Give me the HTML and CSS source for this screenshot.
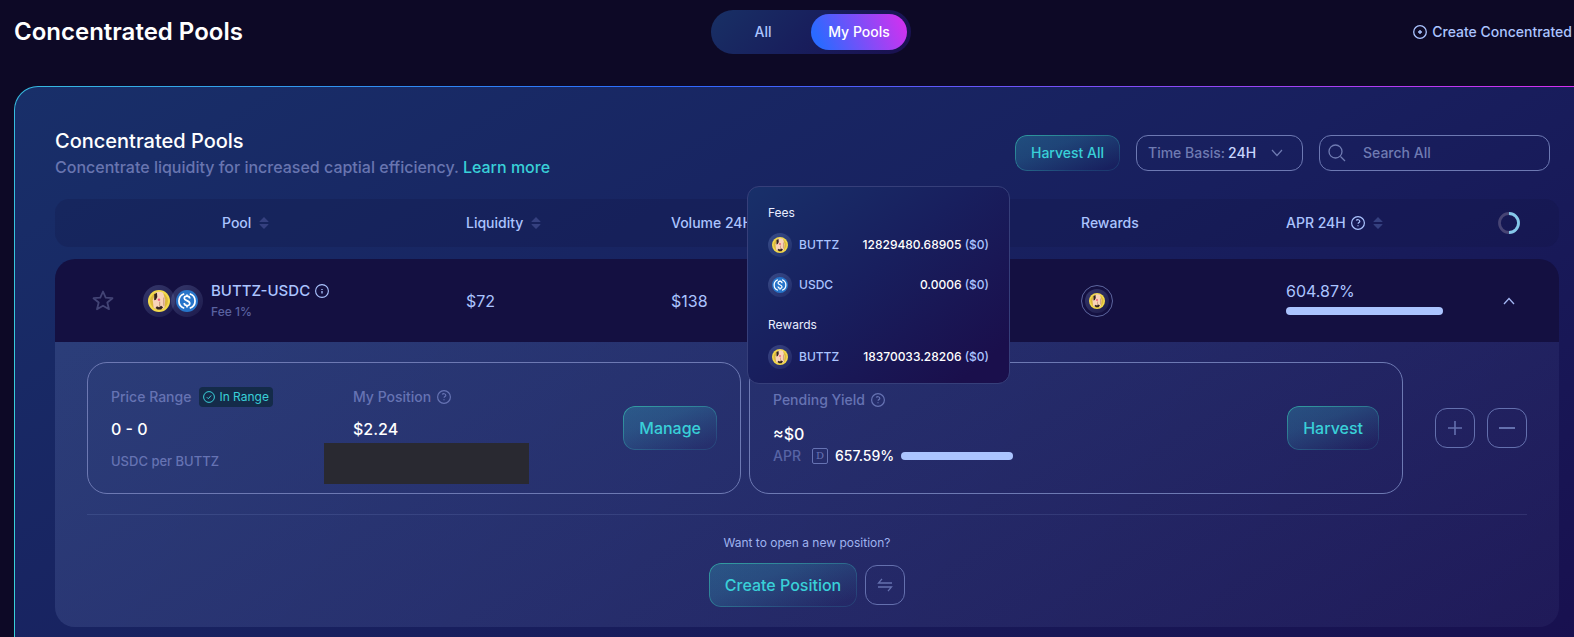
FILE: index.html
```html
<!DOCTYPE html>
<html lang="en">
<head>
<meta charset="utf-8">
<title>Concentrated Pools</title>
<link rel="stylesheet" href="styles.css">
</head>
<body>
<svg class="defs" aria-hidden="true">
  <symbol id="buttz" viewBox="0 0 32 32">
    <circle cx="16" cy="16" r="16" fill="#f3da4c"/>
    <circle cx="16" cy="16" r="13" fill="#dcb93c"/>
    <path d="M11 4c3-2 8-2 11 0l3 10-1 11c-2 4-13 4-16 0l-1-10z" fill="#f8d3b8"/>
    <path d="M9 6l4-2 .5 6-2 4-2.500 1zM11 26l2-2.500 3 1.500 3-2 3 2-3 3.500h-5z" fill="#33241f"/>
    <path d="M17 17v7M23 11v12" stroke="#b98468" stroke-width="1.200"/>
    <circle cx="16" cy="14" r="1.800" fill="#f0567a"/>
  </symbol>
  <symbol id="usdc" viewBox="0 0 32 32">
    <circle cx="16" cy="16" r="16" fill="#2775ca"/>
    <path d="M12 5.500a11 11 0 0 0 0 21M20 5.500a11 11 0 0 1 0 21" fill="none" stroke="#fff" stroke-width="2.500"/>
    <path d="M20 12.500c0-5-8-4.500-8-.5s8 3 8 7.500-8 4-8-.5M16 6.500v3M16 22.500v3" fill="none" stroke="#fff" stroke-width="2.500"/>
  </symbol>
  <symbol id="help" viewBox="0 0 14 14">
    <circle cx="7" cy="7" r="6.400" fill="none" stroke="currentColor" stroke-width="1.200"/>
    <path d="M5.300 4.600c.6-1.300 3.500-1.200 3.500.6 0 1.300-1.600 1.300-1.700 2.600M7 9.200v1" fill="none" stroke="currentColor" stroke-width="1.200"/>
  </symbol>
  <symbol id="sort" viewBox="0 0 10 12">
    <path d="M5 0l4.500 4.500q.3.500-.4.500H.9q-.7 0-.4-.5zM5 12L.5 7.500Q.2 7 .9 7h8.200q.7 0 .4.500z" fill="currentColor"/>
  </symbol>
</svg>

<header class="topbar">
  <h1 class="title">Concentrated Pools</h1>
  <nav class="tabs">
    <button class="tab">All</button>
    <button class="tab tab-active">My Pools</button>
  </nav>
  <a class="create-link" href="#">
    <svg width="14" height="14" viewBox="0 0 14 14"><circle cx="7" cy="7" r="6.300" fill="none" stroke="currentColor" stroke-width="1.300"/><path d="M7 5v4M5 7h4" stroke="currentColor" stroke-width="1.400"/></svg>
    Create Concentrated
  </a>
</header>

<main class="panel">
  <div class="panel-head">
    <div>
      <h2 class="panel-title">Concentrated Pools</h2>
      <p class="panel-sub">Concentrate liquidity for increased captial efficiency. <a href="#">Learn more</a></p>
    </div>
    <div class="tools">
      <button class="glow glow-small">Harvest All</button>
      <div class="field field-basis">
        <label for="basis">Time Basis:</label>
        <select id="basis"><option>24H</option><option>7D</option><option>30D</option></select>
        <svg width="12" height="8" viewBox="0 0 12 8"><path d="M1 1l5 5.500L11 1" fill="none" stroke="currentColor" stroke-width="1.200"/></svg>
      </div>
      <div class="field field-search">
        <svg width="18" height="18" viewBox="0 0 18 18"><circle cx="7.500" cy="7.500" r="6.500" fill="none" stroke="currentColor" stroke-width="1.300"/><path d="M12.500 12.500l4.500 4.500" stroke="currentColor" stroke-width="1.300"/></svg>
        <input type="text" placeholder="Search All" aria-label="Search All">
      </div>
    </div>
  </div>

  <table class="pools">
    <colgroup><col class="c-fav"><col><col class="c-data"><col class="c-data"><col class="c-data"><col class="c-data"><col class="c-data"><col class="c-act"></colgroup>
    <thead>
      <tr>
        <th></th>
        <th class="th-pool"><span class="th">Pool <svg class="sort"><use href="#sort"/></svg></span></th>
        <th><span class="th">Liquidity <svg class="sort"><use href="#sort"/></svg></span></th>
        <th><span class="th">Volume 24H</span></th>
        <th></th>
        <th>Rewards</th>
        <th><span class="th">APR 24H <svg class="help"><use href="#help"/></svg><svg class="sort"><use href="#sort"/></svg></span></th>
        <th class="act"><svg width="22" height="22" viewBox="0 0 22 22"><circle cx="11" cy="11" r="9.500" fill="none" stroke="#474474" stroke-width="2.800"/><path d="M11 1.500a9.500 9.500 0 0 1 0 19" fill="none" stroke="#84c8ea" stroke-width="2.800"/></svg></th>
      </tr>
    </thead>
    <tbody>
      <tr class="pool-row">
        <td class="fav"><svg width="22" height="22" viewBox="0 0 22 22"><path d="M11 1.500l2.700 6.200 6.800.5-5.200 4.300 1.700 6.700-6-3.500-6 3.500 1.700-6.700-5.200-4.300 6.800-.5z" fill="none" stroke="#434475" stroke-width="1.800" stroke-linejoin="round"/></svg></td>
        <td>
          <div class="pair">
            <span class="coins"><span class="coin"><svg><use href="#buttz"/></svg></span><span class="coin"><svg><use href="#usdc"/></svg></span></span>
            <span class="pair-text">
              <span class="pair-name">BUTTZ-USDC <svg width="14" height="14" viewBox="0 0 14 14"><circle cx="7" cy="7" r="6.400" fill="none" stroke="currentColor" stroke-width="1.100"/><path d="M7 5v1M7 7v2.500" stroke="currentColor" stroke-width="1.300"/></svg></span>
              <span class="pair-fee">Fee 1%</span>
            </span>
          </div>
        </td>
        <td>$72</td>
        <td>$138</td>
        <td></td>
        <td><span class="ring"><span class="coin coin-small"><svg><use href="#buttz"/></svg></span></span></td>
        <td><div class="apr">604.87%<span class="bar"></span></div></td>
        <td class="act"><svg width="12" height="8" viewBox="0 0 12 8"><path d="M1 7l5-5.500L11 7" fill="none" stroke="#a3b6f2" stroke-width="1.300"/></svg></td>
      </tr>
      <tr>
        <td class="detail" colspan="8">
          <div class="cards">
            <section class="card">
              <div class="stat stat-range">
                <span class="label">Price Range <span class="badge"><svg width="12" height="12" viewBox="0 0 12 12"><circle cx="6" cy="6" r="5.400" fill="none" stroke="currentColor"/><path d="M3.800 6.200l1.500 1.500 2.900-3.200" fill="none" stroke="currentColor"/></svg>In Range</span></span>
                <span class="value">0 - 0</span>
                <span class="note">USDC per BUTTZ</span>
              </div>
              <div class="stat stat-position">
                <span class="label">My Position <svg class="help"><use href="#help"/></svg></span>
                <span class="value">$2.24</span>
                <span class="cover"></span>
              </div>
              <button class="glow">Manage</button>
            </section>
            <section class="card">
              <div class="stat stat-yield">
                <span class="label">Pending Yield <svg class="help"><use href="#help"/></svg></span>
                <span class="value">≈$0</span>
                <span class="yield-apr">APR <span class="day">D</span><b>657.59%</b><span class="bar bar-short"></span></span>
              </div>
              <button class="glow">Harvest</button>
              <aside class="tip" role="tooltip">
                <h3>Fees</h3>
                <div class="tip-row"><span class="coin coin-small"><svg><use href="#buttz"/></svg></span>BUTTZ<span class="amount"><b>12829480.68905</b> ($0)</span></div>
                <div class="tip-row"><span class="coin coin-small"><svg><use href="#usdc"/></svg></span>USDC<span class="amount"><b>0.0006</b> ($0)</span></div>
                <h3>Rewards</h3>
                <div class="tip-row"><span class="coin coin-small"><svg><use href="#buttz"/></svg></span>BUTTZ<span class="amount"><b>18370033.28206</b> ($0)</span></div>
              </aside>
            </section>
            <div class="steps">
              <button class="square" aria-label="Add liquidity"><svg width="16" height="16" viewBox="0 0 16 16"><path d="M8 1v14M1 8h14" stroke="currentColor" stroke-width="1.600"/></svg></button>
              <button class="square" aria-label="Remove liquidity"><svg width="18" height="16" viewBox="0 0 18 16"><path d="M1 8h16" stroke="currentColor" stroke-width="2"/></svg></button>
            </div>
          </div>
          <div class="open">
            <p>Want to open a new position?</p>
            <div class="open-actions">
              <button class="glow">Create Position</button>
              <button class="square" aria-label="Swap"><svg width="16" height="14" viewBox="0 0 16 14"><path d="M5 .8L1.500 5H15M1 9h13.500L11 13.200" fill="none" stroke="currentColor" stroke-width="1.300"/></svg></button>
            </div>
          </div>
        </td>
      </tr>
    </tbody>
  </table>
</main>
</body>
</html>
```
FILE: styles.css
```css
* { box-sizing: border-box; }

:root {
  --light: #abc4ff;
  --muted: #6875b0;
  --line: #6d79b3;
  --teal: #39d0d8;
}

html { overflow: hidden; background: #0d0926; }

body {
  margin: 0;
  padding-left: 14px;
  height: 100vh;
  overflow: hidden;
  background: #0d0926;
  color: var(--light);
  font: 500 14px/20px Inter, "Liberation Sans", sans-serif;
}

h1, h2, h3, p { margin: 0; font-weight: 500; }
a { color: inherit; text-decoration: none; }
svg { display: block; flex: none; }
button, input, select { font: inherit; color: inherit; margin: 0; }
button { cursor: pointer; border: 0; background: none; }
.defs { position: absolute; width: 0; height: 0; }
.help { width: 14px; height: 14px; }
.sort { width: 10px; height: 12px; color: #35407f; }

/* Top bar */
.topbar {
  display: grid;
  grid-template-columns: 1fr auto 1fr;
  align-items: center;
  height: 64px;
  margin-right: -34px;
}
.title { color: #fff; font-size: 24px; line-height: 32px; font-weight: 600; }
.tabs {
  display: flex;
  padding: 4px;
  border-radius: 22px;
  background: linear-gradient(135deg, #183065, #181e5c 50%, #1a1050);
}
.tab { width: 96px; height: 36px; border-radius: 18px; padding: 0; }
.tab-active { color: #fff; background: linear-gradient(66deg, #2b6aff 10%, #da2eef 100%); }
.create-link {
  display: flex;
  align-items: center;
  gap: 5px;
  justify-self: end;
  padding-right: 36px;
  white-space: nowrap;
}

/* Panel with gradient outline, wider than the window */
.panel {
  margin: 22px -26px 0 0;
  padding: 40px 40px 60px;
  border: 1px solid transparent;
  border-radius: 24px;
  background:
    linear-gradient(150deg, #182f69, #181f5e 52%, #180f4e) padding-box,
    linear-gradient(245deg, #da2eef, #2b6aff 50%, #39d0d8 94%) border-box;
}
.panel-head { display: flex; justify-content: space-between; align-items: center; height: 52px; }
.panel-title { color: #fff; font-size: 20px; line-height: 28px; }
.panel-sub { color: var(--muted); font-size: 16px; line-height: 24px; white-space: nowrap; }
.panel-sub a { color: var(--teal); }

.tools { display: flex; gap: 16px; padding-right: 9px; }
.field {
  display: flex;
  align-items: center;
  height: 36px;
  border: 1px solid var(--line);
  border-radius: 12px;
  color: #6f7bb2;
}
.field-basis { width: 167px; padding: 0 19px 0 11px; white-space: nowrap; }
.field-basis select {
  appearance: none;
  flex: 1;
  min-width: 0;
  padding: 0 3px;
  border: 0;
  background: none;
  color: #c8d6ff;
}
.field-search { width: 231px; padding: 0 12px 0 8px; gap: 17px; }
.field-search input { flex: 1; min-width: 0; padding: 0; border: 0; outline: 0; background: none; }
.field-search input::placeholder { color: #6f7bb2; opacity: 1; }

.glow {
  position: relative;
  height: 44px;
  padding: 0 16px;
  border-radius: 12px;
  color: var(--teal);
  font-size: 16px;
  white-space: nowrap;
  background: linear-gradient(160deg, rgba(57, 208, 216, .25), rgba(57, 208, 216, .2) 35%, rgba(57, 208, 216, 0) 90%);
}
.glow::before {
  content: "";
  position: absolute;
  inset: 0;
  padding: 1px;
  border-radius: inherit;
  background: linear-gradient(160deg, rgba(57, 208, 180, .6), rgba(57, 208, 216, .15) 75%);
  mask: linear-gradient(#000 0 0) content-box exclude, linear-gradient(#000 0 0);
}
.glow-small { height: 36px; font-size: 14px; }

.square {
  display: grid;
  place-items: center;
  width: 40px;
  height: 40px;
  padding: 0;
  border: 1px solid #6470ae;
  border-radius: 12px;
  color: #6470ae;
}

/* Pools table */
.pools {
  width: 100%;
  margin-top: 20px;
  table-layout: fixed;
  border-spacing: 0;
}
.pools th, .pools td { padding: 0; text-align: left; font-weight: 500; }
.c-fav { width: 88px; }
.c-data { width: 205px; }
.c-act { width: 68px; }
.pools thead th { height: 48px; background: rgba(20, 16, 65, .22); }
.pools thead th:first-child { border-radius: 14px 0 0 14px; }
.pools thead th:last-child { border-radius: 0 14px 14px 0; }
.pools .th-pool { padding-left: 79px; }
.th { display: flex; align-items: center; gap: 8px; white-space: nowrap; }
.th .help { margin-left: -3px; }
.pools tbody::before { content: ""; display: block; height: 12px; }
.pools .act { padding-right: 32px; }
.act svg { margin: 0 auto; }

.pools .pool-row td { height: 83px; background: #141041; font-size: 16px; font-weight: 400; }
.pool-row td:first-child { border-top-left-radius: 20px; }
.pool-row td:last-child { border-top-right-radius: 20px; }
.pools .fav { padding-left: 37px; }
.pair { display: flex; align-items: center; gap: 8px; }
.coins { display: flex; }
.coin {
  display: grid;
  place-items: center;
  width: 32px;
  height: 32px;
  border-radius: 50%;
  background: linear-gradient(140deg, rgba(171, 196, 255, .22), rgba(171, 196, 255, .06));
}
.coin + .coin { margin-left: -4px; }
.coin svg { width: 22px; height: 22px; }
.coin-small { width: 24px; height: 24px; }
.coin-small svg { width: 16px; height: 16px; }
.pair-text { display: grid; gap: 3px; }
.pair-name { display: flex; align-items: center; gap: 5px; font-size: 15px; font-weight: 500; line-height: 20px; }
.pair-fee { color: #5a62a0; font-size: 12px; line-height: 16px; font-weight: 500; }
.ring {
  display: grid;
  place-items: center;
  width: 32px;
  height: 32px;
  border: 1px solid #5c659e;
  border-radius: 50%;
}
.apr { display: grid; gap: 6px; padding-bottom: 6px; line-height: 20px; }
.bar { display: block; width: 157px; height: 8px; border-radius: 4px; background: var(--light); }
.bar-short { width: 112px; }

/* Expanded row */
.pools .detail {
  padding: 20px 32px;
  border-radius: 0 0 20px 20px;
  background: linear-gradient(125deg, rgba(171, 196, 255, .13), rgba(171, 196, 255, .09) 50%, rgba(171, 196, 255, .05));
}
.cards {
  display: flex;
  gap: 8px;
  align-items: stretch;
  padding-bottom: 20px;
  border-bottom: 1px solid rgba(171, 196, 255, .12);
}
.card {
  position: relative;
  display: flex;
  flex: 1;
  align-items: center;
  height: 132px;
  padding: 0 23px;
  border: 1px solid var(--line);
  border-radius: 20px;
}
.card .glow { margin-left: auto; }
.stat { display: grid; align-content: center; justify-items: start; gap: 10px; }
.stat-range { width: 242px; }
.label { display: flex; align-items: center; gap: 6px; height: 20px; color: #6673b3; white-space: nowrap; }
.value { color: #fff; font-size: 16px; line-height: 24px; }
.note { color: #6673b3; font-size: 13px; }
.badge {
  display: flex;
  align-items: center;
  gap: 4px;
  height: 20px;
  margin-left: 2px;
  padding: 0 4px;
  border-radius: 4px;
  background: #142b49;
  color: var(--teal);
  font-size: 12px;
  font-weight: 400;
}
.stat-range, .stat-position { align-self: start; padding-top: 24px; }
.stat-position { position: relative; }
.cover {
  position: absolute;
  top: 80px;
  left: -29px;
  width: 205px;
  height: 41px;
  background: #292931;
}
.stat-yield { gap: 0; }
.stat-yield .value { margin-top: 12px; }
.yield-apr { display: flex; align-items: center; gap: 7px; color: #5864a5; }
.yield-apr b { color: #fff; font-weight: 500; }
.day {
  display: grid;
  place-items: center;
  width: 16px;
  height: 16px;
  margin-left: 4px;
  border: 1px solid #6673b3;
  border-radius: 2px;
  color: #6673b3;
  font: 10px/14px "DejaVu Serif", serif;
}
.steps { display: flex; align-items: center; gap: 12px; margin-left: 24px; }

.open { display: grid; justify-items: center; gap: 10px; padding-top: 18px; }
.open p { color: #9fb3ef; font-size: 12px; line-height: 20px; font-weight: 400; }
.open-actions { display: flex; align-items: center; gap: 8px; }

/* Pending yield tooltip */
.tip {
  position: absolute;
  left: -3px;
  bottom: 109px;
  width: 263px;
  padding: 16px 20px 14px;
  border: 1px solid #363f7a;
  border-radius: 12px;
  background: linear-gradient(140deg, #18306a, #181f5e 45%, #1a0f4c 90%);
  font-size: 12px;
}
.tip h3 { color: #e8edff; font-size: 12px; line-height: 20px; font-weight: 400; }
.tip-row { display: flex; align-items: center; gap: 7px; height: 24px; margin: 10px 0 16px; }
.tip-row:last-child { margin-bottom: 0; }
.tip-row + h3 { margin-top: 18px; }
.amount { margin-left: auto; }
.amount b { color: #fff; font-weight: 500; }
```
